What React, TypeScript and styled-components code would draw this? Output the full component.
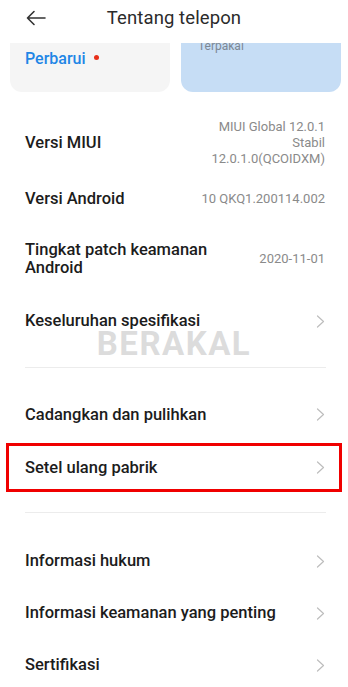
import { FC } from "react";
import styled, { createGlobalStyle } from "styled-components";

const GlobalStyle = createGlobalStyle`
  html, body {
    margin: 0;
    padding: 0;
    background: #ffffff;
  }

  body {
    font-family: Roboto, "Noto Sans", "Liberation Sans", sans-serif;
    -webkit-font-smoothing: antialiased;
  }
`;

interface InfoRow {
  label: string;
  value?: string[];
  height: number;
}

const infoRows: InfoRow[] = [
  {
    label: "Versi MIUI",
    value: ["MIUI Global 12.0.1", "Stabil", "12.0.1.0(QCOIDXM)"],
    height: 58,
  },
  { label: "Versi Android", value: ["10 QKQ1.200114.002"], height: 53 },
  {
    label: "Tingkat patch keamanan Android",
    value: ["2020-11-01"],
    height: 68,
  },
];

const Chevron: FC = () => (
  <svg width="9" height="13" viewBox="0 0 9 13">
    <path
      d="M1.5 1 L7.5 6.5 L1.5 12"
      fill="none"
      stroke="#bdbdbd"
      strokeWidth="1.2"
      strokeLinecap="round"
      strokeLinejoin="round"
    />
  </svg>
);

const BackArrow: FC = () => (
  <svg width="22" height="22" viewBox="0 0 22 22">
    <path
      d="M20 11 H2.5 M9 4.5 L2.5 11 L9 17.5"
      fill="none"
      stroke="#333333"
      strokeWidth="1.6"
      strokeLinecap="round"
      strokeLinejoin="round"
    />
  </svg>
);

const App: FC = () => {
  return (
    <Page>
      <GlobalStyle />

      <Header>
        <BackButton>
          <BackArrow />
        </BackButton>
        <Title>Tentang telepon</Title>
      </Header>

      <Cards>
        <Card>
          <UpdateLink>Perbarui</UpdateLink>
          <RedDot />
        </Card>
        <Card $tone="blue">
          <CutText>Terpakai</CutText>
        </Card>
      </Cards>

      <List>
        {infoRows.map((row) => (
          <Row key={row.label} $height={row.height}>
            <Label $narrow={!!row.value && row.value.length === 1 && row.height > 60}>
              {row.label}
            </Label>
            {row.value && (
              <Value>
                {row.value.map((line) => (
                  <span key={line}>{line}</span>
                ))}
              </Value>
            )}
          </Row>
        ))}

        <Row $height={56}>
          <Label>Keseluruhan spesifikasi</Label>
          <Chevron />
        </Row>

        <Divider />

        <Row $height={53}>
          <Label>Cadangkan dan pulihkan</Label>
          <Chevron />
        </Row>
        <Row $height={53}>
          <Label>Setel ulang pabrik</Label>
          <Chevron />
          <Highlight />
        </Row>

        <Divider $after={22} />

        <Row $height={52}>
          <Label>Informasi hukum</Label>
          <Chevron />
        </Row>
        <Row $height={52}>
          <Label>Informasi keamanan yang penting</Label>
          <Chevron />
        </Row>
        <Row $height={52}>
          <Label>Sertifikasi</Label>
          <Chevron />
        </Row>
      </List>

      <Watermark>BERAKAL</Watermark>
    </Page>
  );
};

const Page = styled.div`
  position: relative;
  width: 348px;
  height: 687px;
  overflow: hidden;
  background: #ffffff;
`;

const Header = styled.div`
  position: relative;
  height: 36px;
  padding-bottom: 7px;

  display: flex;
  align-items: center;
  justify-content: center;
`;

const BackButton = styled.div`
  position: absolute;
  left: 25px;
  top: 7px;

  display: flex;
`;

const Title = styled.div`
  font-size: 18.5px;
  color: #2b2b2b;
  letter-spacing: 0.1px;
`;

const Cards = styled.div`
  height: 49px;
  padding: 0 7px 0 10px;

  display: grid;
  grid-template-columns: 160px 160px;
  column-gap: 11px;
`;

const Card = styled.div<{ $tone?: "blue" }>`
  position: relative;
  overflow: hidden;
  border-radius: 0 0 12px 12px;
  background: ${(p) => (p.$tone === "blue" ? "#c6ddf5" : "#f5f5f5")};

  display: flex;
  align-items: flex-start;
  padding: 6px 0 0 15px;
`;

const UpdateLink = styled.span`
  font-size: 16px;
  font-weight: 500;
  color: #1f86e6;
`;

const RedDot = styled.span`
  width: 5px;
  height: 5px;
  margin: 6px 0 0 8px;
  border-radius: 50%;
  background: #e8301a;
`;

const CutText = styled.span`
  margin: -10px 0 0 2px;
  font-size: 12px;
  color: #7d8894;
`;

const List = styled.div`
  padding-top: 22px;

  display: flex;
  flex-direction: column;
`;

const Row = styled.div<{ $height: number }>`
  position: relative;
  height: ${(p) => p.$height}px;
  padding: 0 23px 0 25px;

  display: flex;
  align-items: center;
  justify-content: space-between;
`;

const Label = styled.div<{ $narrow?: boolean }>`
  max-width: ${(p) => (p.$narrow ? "200px" : "none")};
  font-size: 16.5px;
  font-weight: 500;
  line-height: 18px;
  color: #1c1c1c;
`;

const Value = styled.div`
  display: flex;
  flex-direction: column;
  align-items: flex-end;

  font-size: 13px;
  line-height: 16px;
  color: #8a8a8a;
  text-align: right;
`;

const Divider = styled.div<{ $after?: number }>`
  height: 1px;
  margin: 18px 22px ${(p) => p.$after ?? 20}px 25px;
  background: #ececec;
`;

const Highlight = styled.div`
  position: absolute;
  left: 6px;
  right: 6px;
  top: 2px;
  bottom: 2px;
  border: 3px solid #f00000;
`;

const Watermark = styled.div`
  position: absolute;
  left: 0;
  right: 0;
  top: 330px;

  text-align: center;
  font-size: 33px;
  line-height: 27px;
  font-weight: 700;
  letter-spacing: 1.5px;
  color: rgba(190, 190, 190, 0.55);
  pointer-events: none;
`;

export default App;
